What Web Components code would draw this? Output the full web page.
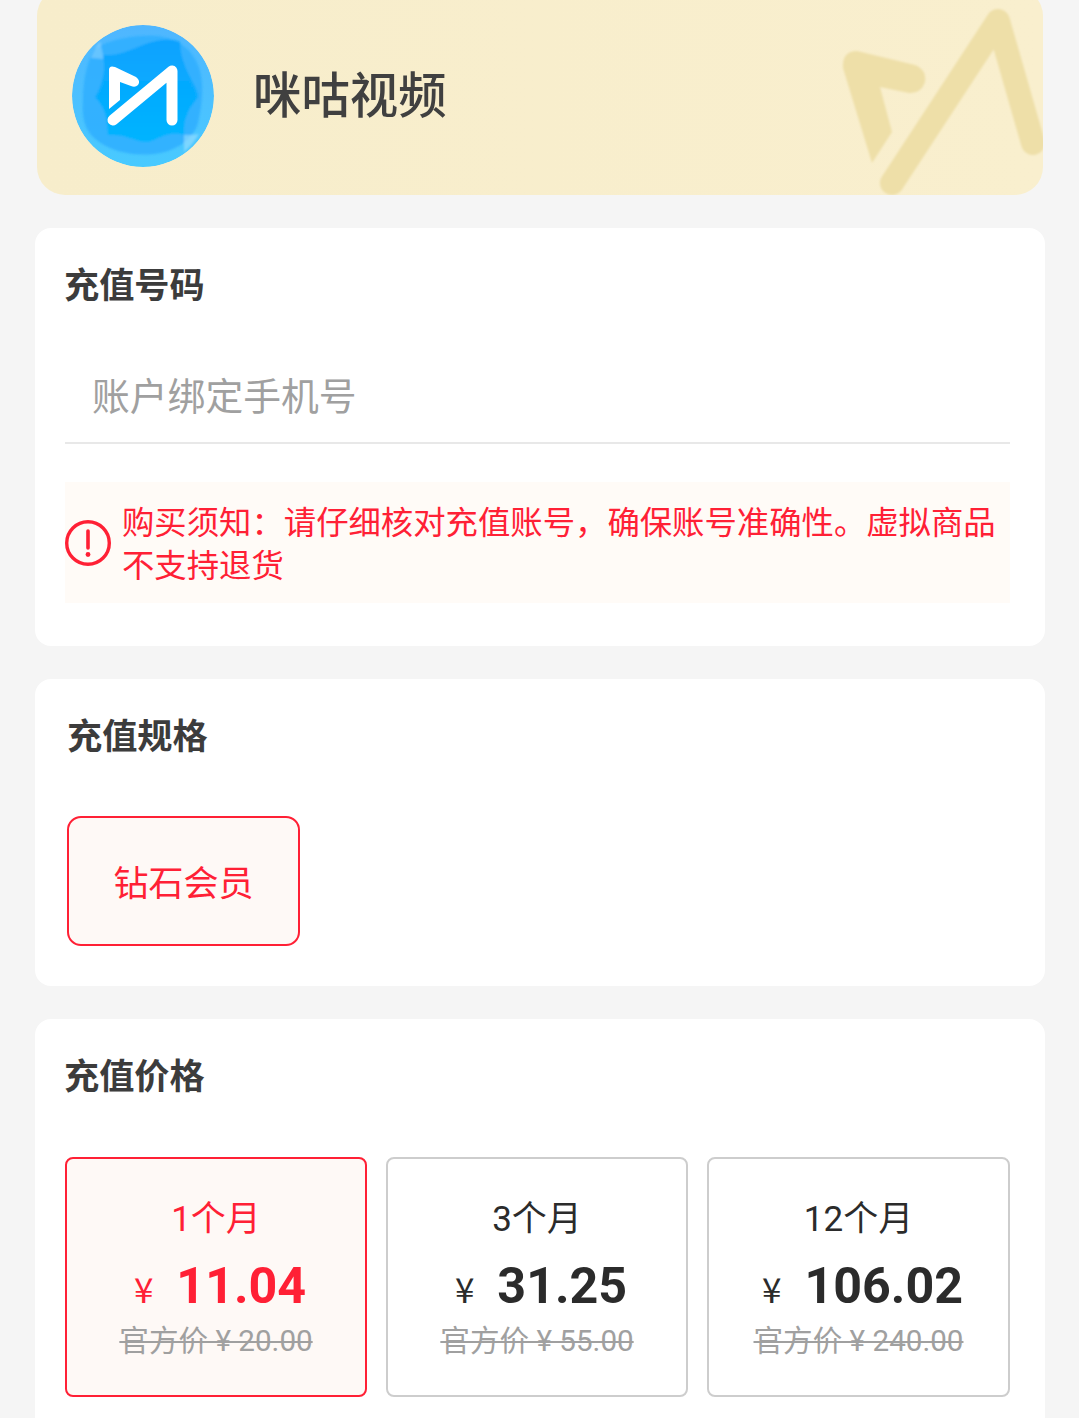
<!DOCTYPE html>
<html lang="zh">
<head>
<meta charset="utf-8">
<title>充值</title>
<style>
    html, body { margin: 0; height: 1418px; overflow: hidden; background: #f5f5f5; }
    body { font-family: Roboto, "Noto Sans CJK SC", sans-serif; color: #3c3c3c; }
    .page { display: flex; flex-direction: column; gap: 33px; padding: 0 34px 0 35px; }
    .prices { display: grid; grid-template-columns: 302px 302px 303px; gap: 19px; }
</style>
</head>
<body>
<div class="page">
    <brand-hero name="咪咕视频"></brand-hero>

    <form-card heading="充值号码" style="height: 418px">
        <phone-field placeholder="账户绑定手机号"></phone-field>
        <notice-box>购买须知&#xFF1A;请仔细核对充值账号&#xFF0C;确保账号准确性。虚拟商品不支持退货</notice-box>
    </form-card>

    <form-card heading="充值规格" inset="2" style="height: 307px">
        <spec-option>钻石会员</spec-option>
    </form-card>

    <form-card heading="充值价格" style="height: 420px">
        <div class="prices">
            <price-tile selected term="1个月" price="11.04" official="20.00"></price-tile>
            <price-tile term="3个月" price="31.25" official="55.00"></price-tile>
            <price-tile term="12个月" price="106.02" official="240.00"></price-tile>
        </div>
    </form-card>
</div>

<script>
class BrandHero extends HTMLElement {
    constructor() {
        super();
        this.attachShadow({ mode: 'open' });
    }

    connectedCallback() {
        this.shadowRoot.innerHTML = `
            <style>
                :host { display: flex; align-items: center; gap: 38px; position: relative; overflow: hidden;
                    box-sizing: border-box; height: 207px; margin: -12px 2px 0 2px; padding: 9px 0 0 35px;
                    background: linear-gradient(90deg, #f7edcb, #f9efce); border-radius: 28px; }
                .logo { flex: none; width: 142px; height: 142px; }
                .name { margin: 3px 0 0 1px; font-size: 48.4px; font-weight: 500; color: #404040; line-height: 1; }
                .mark { position: absolute; left: 0; top: 0; width: 100%; height: 100%; }
            </style>
            <svg class="mark" viewBox="37 -12 1006 207" aria-hidden="true">
                <defs><filter id="soft"><feGaussianBlur stdDeviation="0.9"/></filter></defs>
                <g fill="none" stroke="#eedfa8" stroke-width="24" stroke-linecap="round" stroke-linejoin="round" filter="url(#soft)">
                    <path d="M892 183 998 21 1033 143"/>
                </g>
                <path d="M857 51 915 65Q927 70 925 82 921 94 909 93L880 87 892 132 872 163 843 68Q842 51 857 51Z" fill="#eedfa8" filter="url(#soft)"/>
            </svg>
            <svg class="logo" viewBox="0 0 142 142" aria-hidden="true">
                <defs>
                    <linearGradient id="sky" x1="0" y1="0" x2="0" y2="1">
                        <stop offset="0" stop-color="#4fb6ff"/>
                        <stop offset="1" stop-color="#48caff"/>
                    </linearGradient>
                    <linearGradient id="core" x1="0" y1="0" x2="0" y2="1">
                        <stop offset="0" stop-color="#08a2ff"/>
                        <stop offset="1" stop-color="#05b4ff"/>
                    </linearGradient>
                    <clipPath id="disc"><circle cx="71" cy="71" r="71"/></clipPath>
                    <filter id="blur"><feGaussianBlur stdDeviation="1.1"/></filter>
                </defs>
                <g clip-path="url(#disc)">
                    <circle cx="71" cy="71" r="71" fill="url(#sky)"/>
                    <g filter="url(#blur)">
                        <path d="M22 24C40 14 62 10 84 11 104 12 122 24 128 46 132 62 130 80 126 98 122 112 108 124 88 128 66 132 42 128 26 116 12 106 10 92 11 76 11 58 14 40 22 24Z" fill="#2eaeff" opacity=".85"/>
                        <path d="M31 30C45 32 58 25 71 20 84 15 98 13 108 17 108 30 113 42 118 52 122 60 126 66 126 72 122 78 117 83 115 90 112 97 112 103 112 110 105 108 99 109 94 110 87 112 80 117 74 117 68 117 62 114 57 113 50 110 43 110 36 110 35 102 35 95 33 88 30 81 27 76 23 72 27 66 29 60 31 52 33 44 32 37 31 30Z" fill="url(#core)"/>
                        <path d="M19 33C21 27 24 21 28 16L31 30 31 34Z" fill="#9ad8ff" opacity=".5"/>
                        <path d="M112 110C117 110 122 110 127 109 123 116 118 122 112 127Z" fill="#a6e2ff" opacity=".55"/>
                    </g>
                </g>
                <path d="M37 45Q37 40 43 42L64 52Q69 56 66 60 63 63 59 61L48 57V75L37 84Z" fill="#fff"/>
                <path d="M41 95 100 46V95" fill="none" stroke="#fff" stroke-width="11" stroke-linecap="round" stroke-linejoin="round"/>
            </svg>
            <span class="name">${this.getAttribute('name')}</span>
        `;
    }
}
customElements.define('brand-hero', BrandHero);

class FormCard extends HTMLElement {
    constructor() {
        super();
        this.attachShadow({ mode: 'open' });
    }

    connectedCallback() {
        const inset = Number(this.getAttribute('inset') || 0);
        this.shadowRoot.innerHTML = `
            <style>
                :host { display: block; box-sizing: border-box; padding: 33px 35px 0 ${30 + inset}px;
                    background: #fff; border-radius: 16px; }
                h2 { margin: 0 0 55px ${inset ? 0 : -1}px; font-size: 35.2px; font-weight: 700; line-height: 50px; color: #3c3c3c; }
            </style>
            <h2>${this.getAttribute('heading')}</h2>
            <slot></slot>
        `;
    }
}
customElements.define('form-card', FormCard);

class PhoneField extends HTMLElement {
    constructor() {
        super();
        this.attachShadow({ mode: 'open' });
    }

    connectedCallback() {
        this.shadowRoot.innerHTML = `
            <style>
                :host { display: block; box-sizing: border-box; height: 87px; margin-top: -9px; margin-bottom: 38px;
                    padding: 15px 0 0 27px; border-bottom: 2px solid #e8e8e8; }
                span { font-size: 37.8px; line-height: 50px; color: #a0a0a0; }
            </style>
            <span>${this.getAttribute('placeholder')}</span>
        `;
    }
}
customElements.define('phone-field', PhoneField);

class NoticeBox extends HTMLElement {
    constructor() {
        super();
        this.attachShadow({ mode: 'open' });
    }

    connectedCallback() {
        this.shadowRoot.innerHTML = `
            <style>
                :host { display: flex; align-items: center; gap: 11px; box-sizing: border-box; height: 121px;
                    padding-right: 10px; background: #fffbf7; color: #ff2035; }
                svg { flex: none; width: 46px; height: 46px; }
                p { margin: 4px 0 0; font-size: 32.36px; line-height: 43px; }
            </style>
            <svg viewBox="0 0 46 46" aria-hidden="true">
                <circle cx="23" cy="23" r="21.3" fill="none" stroke="currentColor" stroke-width="3.4"/>
                <path d="M23 11V28" stroke="currentColor" stroke-width="3.6" stroke-linecap="round"/>
                <circle cx="23" cy="34.5" r="2.4" fill="currentColor"/>
            </svg>
            <p><slot></slot></p>
        `;
    }
}
customElements.define('notice-box', NoticeBox);

class SpecOption extends HTMLElement {
    constructor() {
        super();
        this.attachShadow({ mode: 'open' });
    }

    connectedCallback() {
        this.shadowRoot.innerHTML = `
            <style>
                :host { display: flex; align-items: center; justify-content: center; box-sizing: border-box;
                    width: 233px; height: 130px; margin-top: -1px; padding-bottom: 2px; background: #fef9f6;
                    border: 2px solid #ff2035; border-radius: 14px; font-size: 35px; color: #ff2035; }
            </style>
            <slot></slot>
        `;
    }
}
customElements.define('spec-option', SpecOption);

class PriceTile extends HTMLElement {
    constructor() {
        super();
        this.attachShadow({ mode: 'open' });
    }

    connectedCallback() {
        this.shadowRoot.innerHTML = `
            <style>
                :host { display: flex; flex-direction: column; align-items: center; box-sizing: border-box; height: 240px;
                    padding-top: 39px; border: 2px solid #cdcdcd; border-radius: 8px; color: #2b2b2b; }
                :host([selected]) { background: #fef9f6; border-color: #ff2035; color: #ff2035; }
                .term { font-size: 35px; line-height: 44px; }
                .price { display: flex; align-items: center; gap: 23px; margin-top: 11px; padding-left: 8px; line-height: 66px; }
                .yen { font-family: "Noto Sans CJK SC", sans-serif; font-size: 35px; position: relative; top: 2px; }
                .amount { font-size: 50.2px; font-weight: 700; }
                .official { margin-top: 2px; font-size: 29.6px; line-height: 40px; color: #a0a0a0; text-decoration: line-through; }
            </style>
            <div class="term">${this.getAttribute('term')}</div>
            <div class="price"><span class="yen">¥</span><span class="amount">${this.getAttribute('price')}</span></div>
            <div class="official">官方价 ¥ ${this.getAttribute('official')}</div>
        `;
    }
}
customElements.define('price-tile', PriceTile);
</script>
</body>
</html>
